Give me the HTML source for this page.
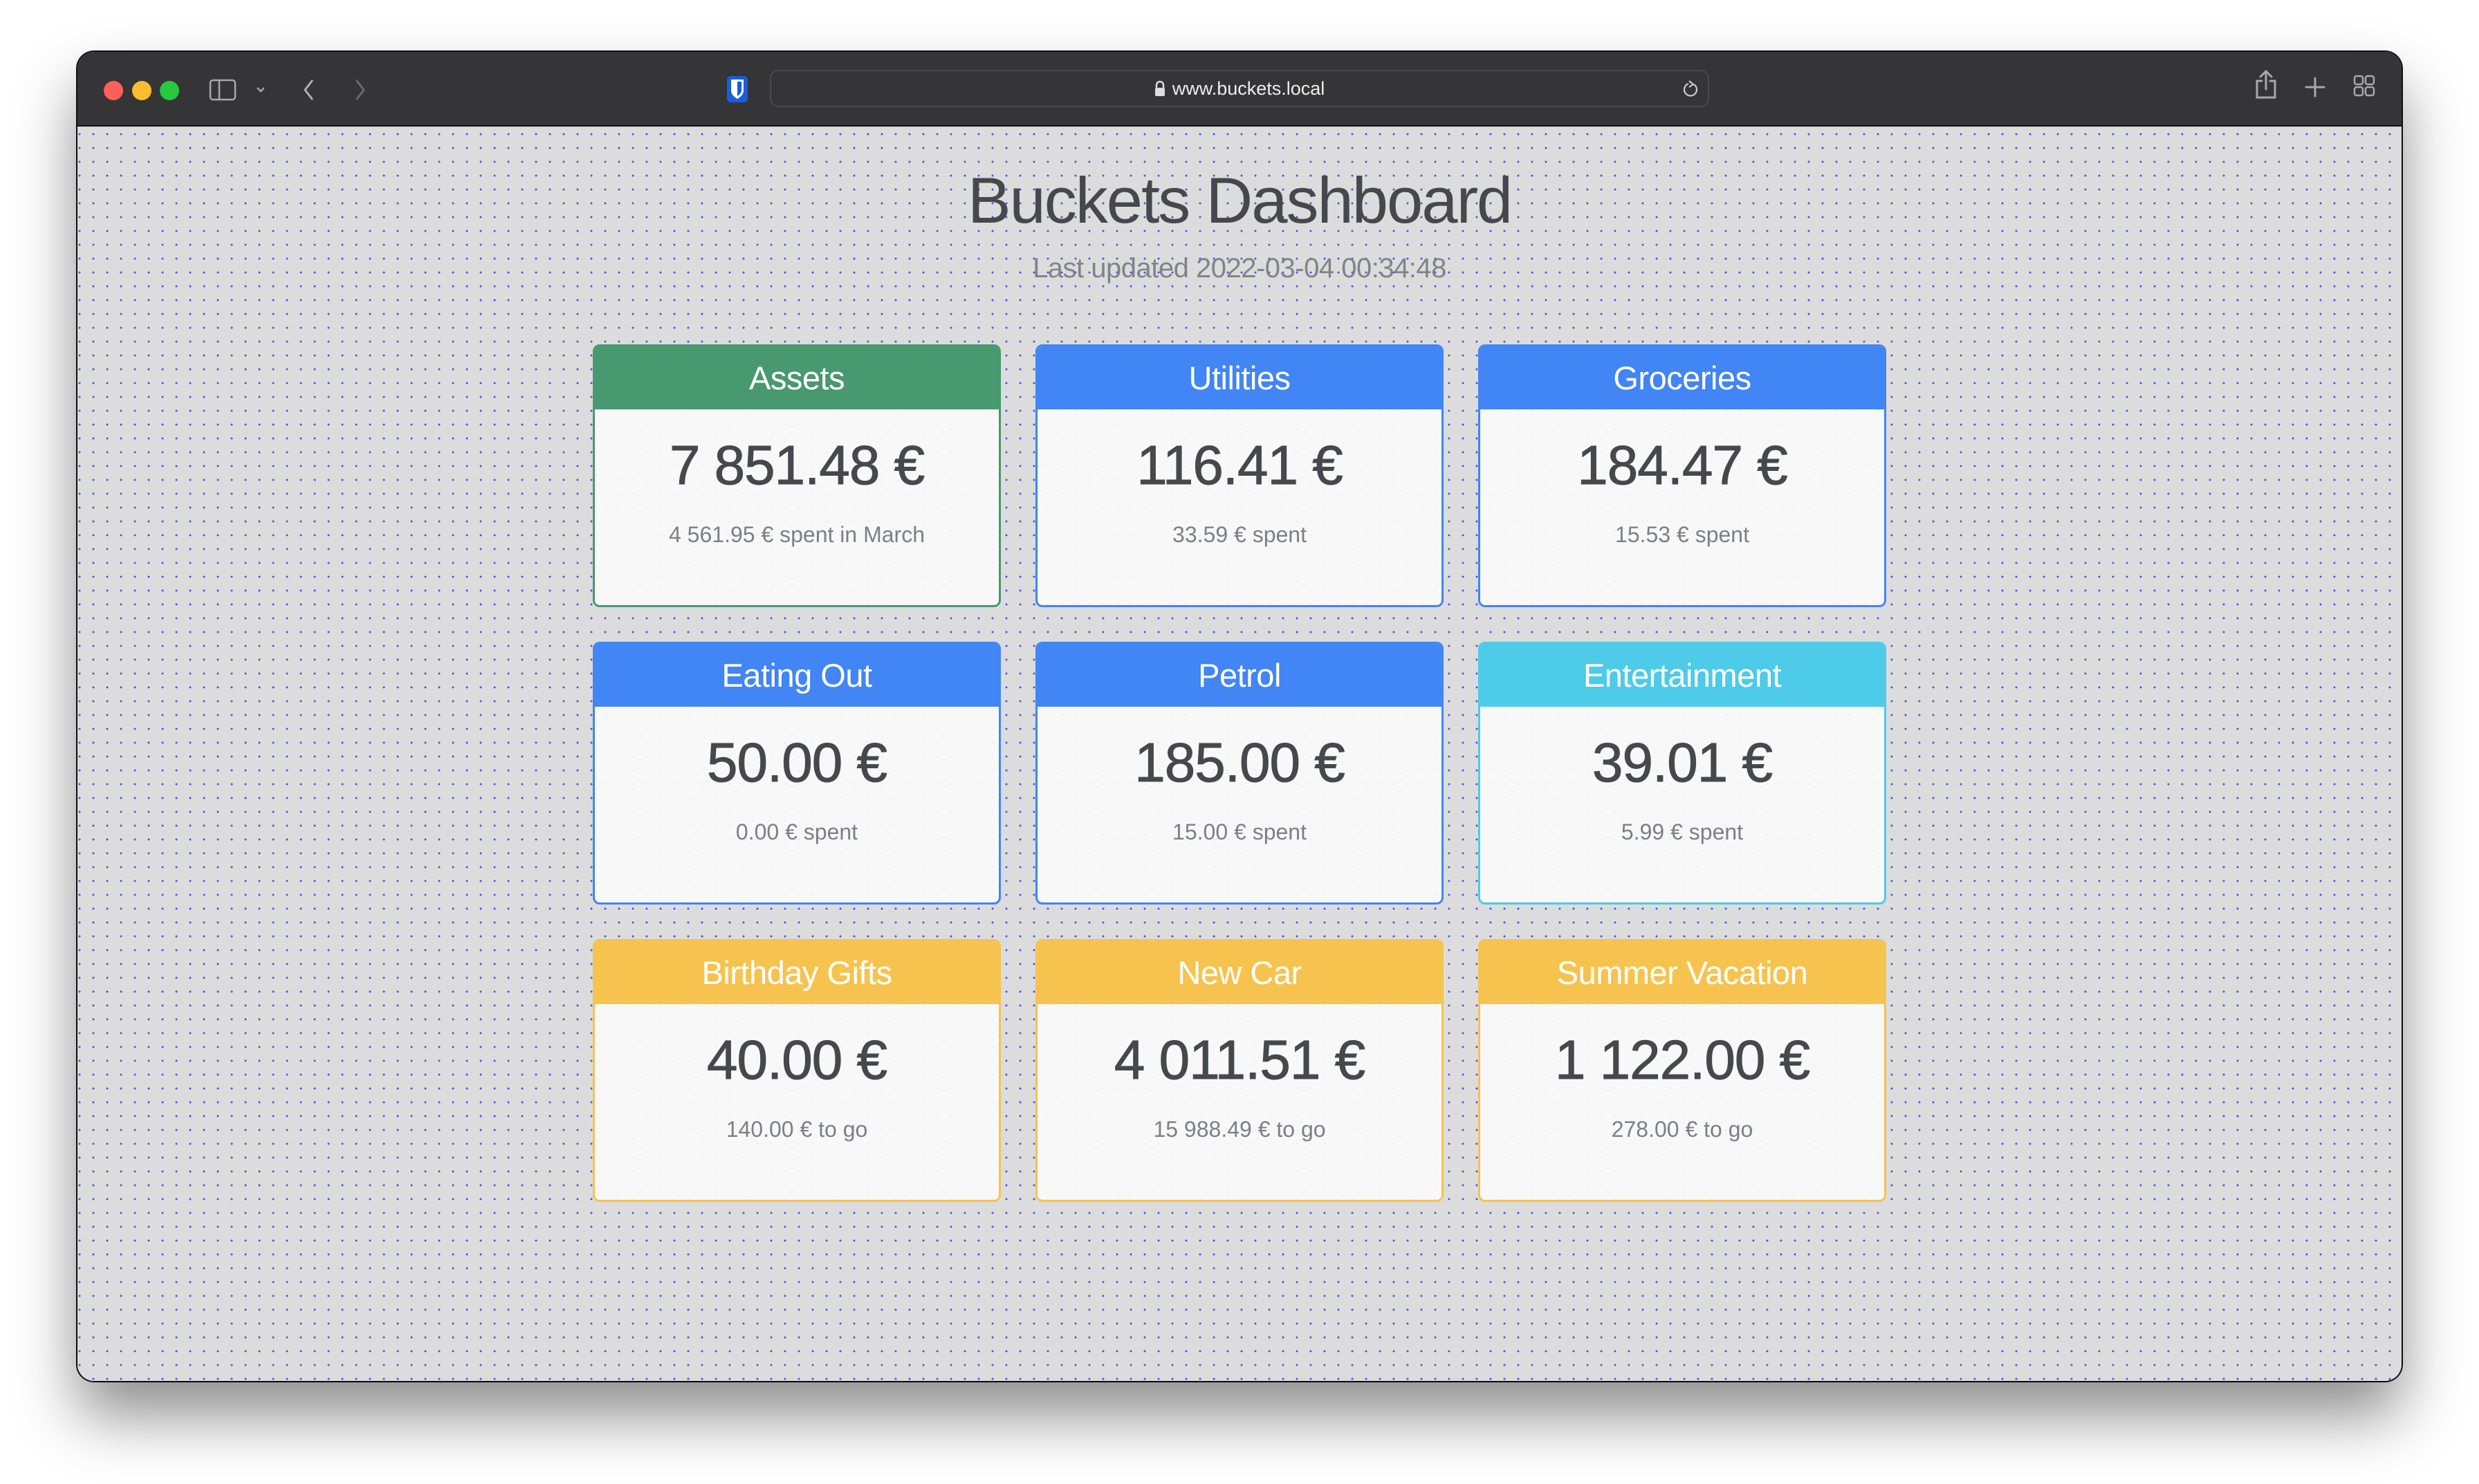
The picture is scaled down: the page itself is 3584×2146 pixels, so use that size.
<!DOCTYPE html>
<html><head><meta charset="utf-8"><style>
*{box-sizing:border-box;margin:0;padding:0}
html,body{width:3584px;height:2146px;background:#fff;overflow:hidden;font-family:"Liberation Sans",sans-serif}
.win{position:absolute;left:112px;top:75px;width:3360px;height:1922px;border-radius:24px;overflow:hidden;box-shadow:0 50px 90px rgba(0,0,0,.45),0 0 0 2px #111;background:#dcdcdc}
.bar{position:absolute;left:0;top:0;width:100%;height:108px;background:#353537;border-bottom:2px solid #111}
.page{position:absolute;left:0;top:108px;width:100%;height:1814px;background-color:#dcdcdc;background-image:radial-gradient(circle,#4848f0 1.3px,transparent 1.6px);background-size:20px 20px;background-position:-7px 1px}
.tl{position:absolute;top:42px;width:28px;height:28px;border-radius:50%}
.url{position:absolute;left:1001px;top:26px;width:1358px;height:54px;border:2px solid #4a4a4c;border-radius:12px;background:#353537;color:#eee;font-size:27px;text-align:center;line-height:50px}
h1{position:absolute;left:0;width:100%;top:52px;text-align:center;font-weight:400;font-size:94px;color:#45484c;letter-spacing:-2px;line-height:110px}
.sub{position:absolute;left:0;width:100%;top:180px;text-align:center;font-size:40px;color:#7d848b;letter-spacing:-.5px;line-height:50px}
.card{position:absolute;width:590px;height:380px;border:3px solid;border-radius:10px;overflow:hidden;background:rgba(250,250,250,.93)}
.hd{height:91px;color:#fff;font-size:47px;text-align:center;line-height:91px;letter-spacing:-.5px}
.num{text-align:center;font-size:80px;color:#45484c;margin-top:35px;letter-spacing:-1px;-webkit-text-stroke:1px #45484c}
.st{text-align:center;font-size:32px;color:#7a8087;margin-top:36px}
.g{border-color:#489870}.g .hd{background:#489870}
.b{border-color:#4285f4}.b .hd{background:#4285f4}
.c{border-color:#4dcbe8}.c .hd{background:#4dcbe8}
.y{border-color:#f6c34f}.y .hd{background:#f6c34f}
</style></head><body>
<div class="win">
<div class="bar">
<div class="tl" style="left:38px;background:#fe5f57"></div>
<div class="tl" style="left:79px;background:#febc2e"></div>
<div class="tl" style="left:119px;background:#28c840"></div>
<svg style="position:absolute;left:190px;top:38px" width="80" height="34" viewBox="0 0 80 34" fill="none" stroke="#a8a8aa" stroke-width="2.5"><rect x="2" y="3" width="36" height="28" rx="4"/><line x1="15" y1="3" x2="15" y2="31"/><path d="M70 14l5 5 5-5" stroke-width="2.5"/></svg>
<svg style="position:absolute;left:320px;top:38px" width="130" height="34" viewBox="0 0 130 34" fill="none" stroke-width="3" stroke-linecap="round"><path d="M19 4L9 17l10 13" stroke="#b0b0b2"/><path d="M84 4l10 13-10 13" stroke="#6a6a6c"/></svg>
<svg style="position:absolute;left:939px;top:35px" width="30" height="38" viewBox="0 0 30 38"><rect width="30" height="38" rx="5" fill="#175ddc"/><path d="M6 5h18v16c0 5-4 9-9 12-5-3-9-7-9-12z" fill="#fff"/><path d="M15 8h6v13c0 3-3 6-6 8z" fill="#175ddc"/></svg>
<div class="url"><svg width="16" height="24" viewBox="0 0 16 24" style="vertical-align:-3px;margin-right:10px"><path d="M3 11V7a5 5 0 0110 0v4" stroke="#ddd" stroke-width="2.5" fill="none"/><rect x="1" y="11" width="14" height="12" rx="2" fill="#ddd"/></svg>www.buckets.local
<svg style="position:absolute;right:12px;top:12px" width="26" height="30" viewBox="0 0 26 30" fill="none" stroke="#ccc" stroke-width="2.2"><path d="M18 7a9 9 0 11-8-1"/><path d="M11 2l6 5-6 4"/></svg></div>
<svg style="position:absolute;left:3146px;top:26px" width="36" height="44" viewBox="0 0 36 44" fill="none" stroke="#a8a8aa" stroke-width="3" stroke-linecap="round"><path d="M12 16H5v24h26V16h-7"/><path d="M18 28V3M10 10l8-8 8 8"/></svg>
<svg style="position:absolute;left:3220px;top:36px" width="30" height="30" viewBox="0 0 30 30" stroke="#a8a8aa" stroke-width="3" stroke-linecap="round"><path d="M15 2v26M2 15h26"/></svg>
<svg style="position:absolute;left:3290px;top:33px" width="32" height="32" viewBox="0 0 32 32" fill="none" stroke="#a8a8aa" stroke-width="2.5"><rect x="2" y="2" width="12" height="12" rx="3"/><rect x="18" y="2" width="12" height="12" rx="3"/><rect x="2" y="18" width="12" height="12" rx="3"/><rect x="18" y="18" width="12" height="12" rx="3"/></svg>
</div>
<div class="page">
<h1>Buckets Dashboard</h1>
<div class="sub">Last updated 2022-03-04 00:34:48</div>
<div class="card g" style="left:745px;top:315px"><div class="hd">Assets</div><div class="num">7 851.48 €</div><div class="st">4 561.95 € spent in March</div></div>
<div class="card b" style="left:1385px;top:315px"><div class="hd">Utilities</div><div class="num">116.41 €</div><div class="st">33.59 € spent</div></div>
<div class="card b" style="left:2025px;top:315px"><div class="hd">Groceries</div><div class="num">184.47 €</div><div class="st">15.53 € spent</div></div>
<div class="card b" style="left:745px;top:745px"><div class="hd">Eating Out</div><div class="num">50.00 €</div><div class="st">0.00 € spent</div></div>
<div class="card b" style="left:1385px;top:745px"><div class="hd">Petrol</div><div class="num">185.00 €</div><div class="st">15.00 € spent</div></div>
<div class="card c" style="left:2025px;top:745px"><div class="hd">Entertainment</div><div class="num">39.01 €</div><div class="st">5.99 € spent</div></div>
<div class="card y" style="left:745px;top:1175px"><div class="hd">Birthday Gifts</div><div class="num">40.00 €</div><div class="st">140.00 € to go</div></div>
<div class="card y" style="left:1385px;top:1175px"><div class="hd">New Car</div><div class="num">4 011.51 €</div><div class="st">15 988.49 € to go</div></div>
<div class="card y" style="left:2025px;top:1175px"><div class="hd">Summer Vacation</div><div class="num">1 122.00 €</div><div class="st">278.00 € to go</div></div>
</div>
</div>
</body></html>
